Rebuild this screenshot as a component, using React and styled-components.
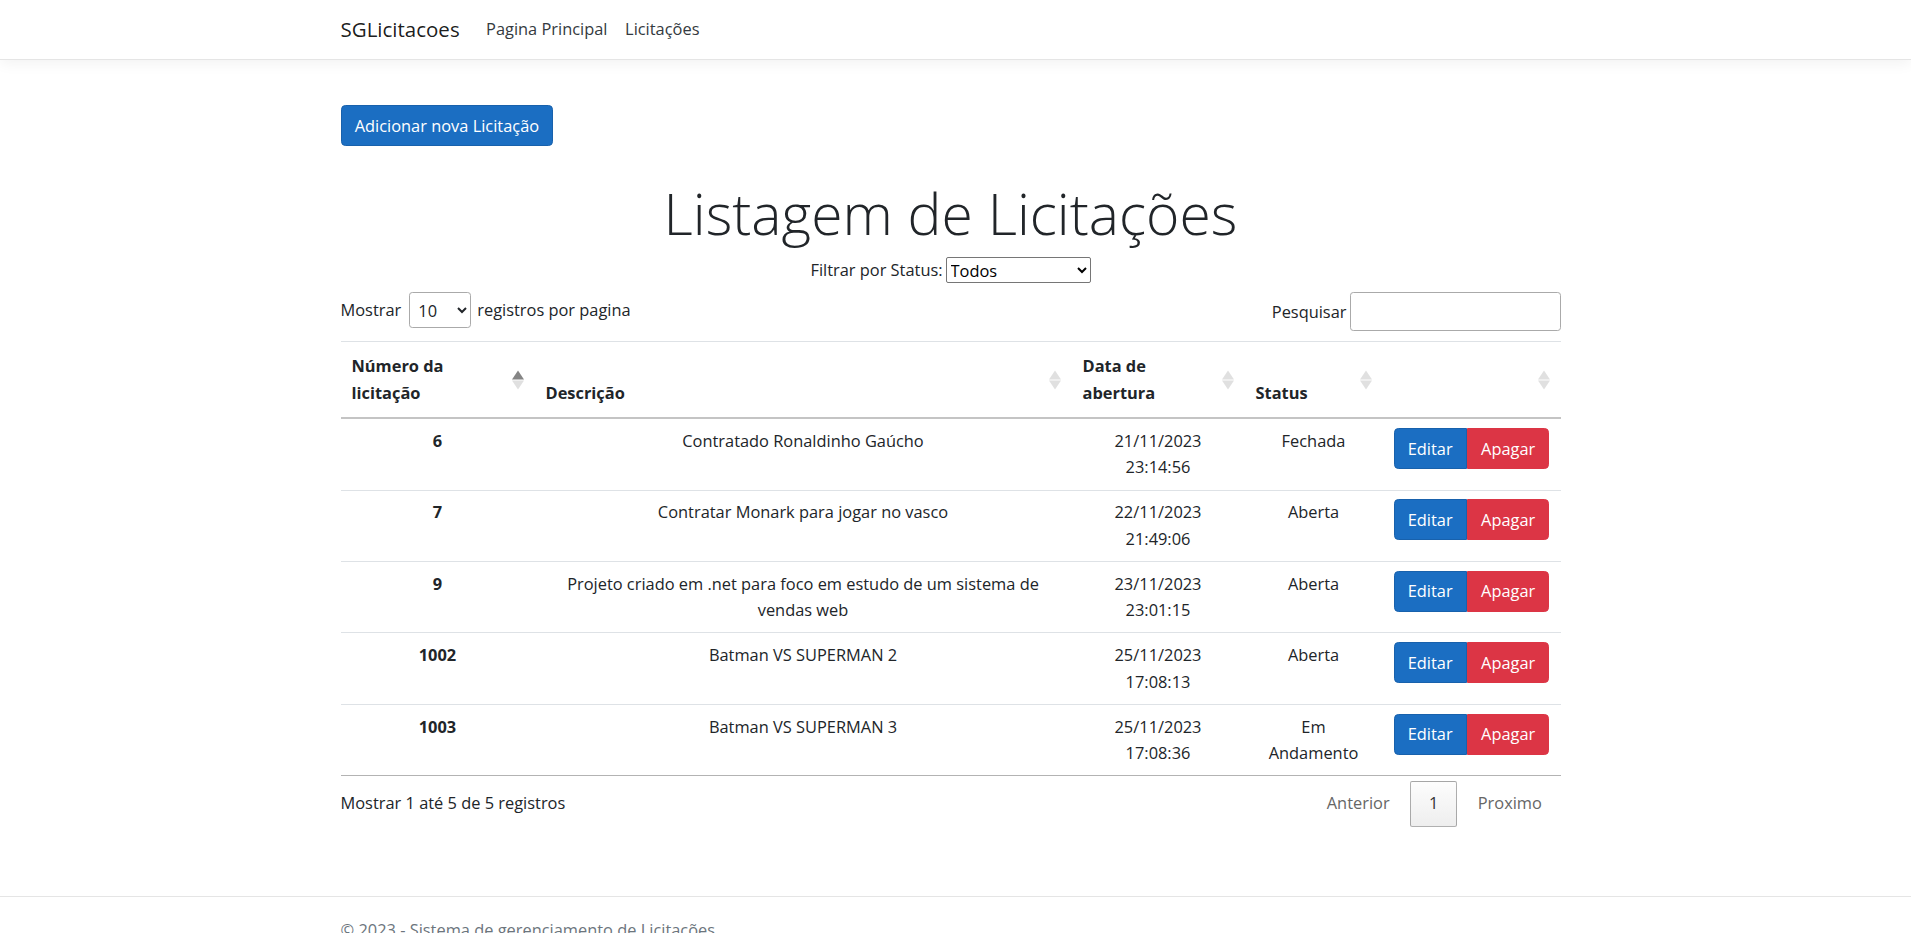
import React from "react";
import styled, { createGlobalStyle, css } from "styled-components";

const GlobalStyle = createGlobalStyle`
  * {
    box-sizing: border-box;
  }
  html {
    overflow: hidden;
  }
  body {
    margin: 0;
    font-family: "Open Sans", "Liberation Sans", sans-serif;
    font-size: 16.4px;
    line-height: 26.4px;
    color: #212529;
    background: #fff;
  }
`;

const Header = styled.header`
  height: 60px;
  background: #fff;
  border-bottom: 1px solid #e5e5e5;
  box-shadow: 0 4px 13px rgba(0, 0, 0, 0.05);
`;

// the original page sits a few pixels left of the centre
const Container = styled.div`
  width: 1220px;
  margin-left: calc(50% - 615px);
`;

const NavBar = styled(Container)`
  height: 100%;
  display: flex;
  align-items: center;
`;

const Brand = styled.a`
  font-size: 20.5px;
  line-height: 33px;
  color: rgba(0, 0, 0, 0.9);
  margin-right: 17.6px;
  text-decoration: none;
`;

const NavLink = styled.a`
  padding: 0 8.8px;
  color: #343a40;
  text-decoration: none;
`;

const Main = styled(Container)`
  padding-top: 45px;
`;

const AddButton = styled.button`
  height: 41px;
  padding: 6.6px 13.2px;
  font: inherit;
  line-height: 26.4px;
  color: #fff;
  background: #1b6ec2;
  border: 1px solid #1861ac;
  border-radius: 4.4px;
`;

const Title = styled.h1`
  margin: 30px 0 0;
  text-align: center;
  font-size: 57px;
  font-weight: 300;
  line-height: 74px;
`;

const FilterRow = styled.div`
  display: flex;
  justify-content: center;
  align-items: center;
  gap: 3px;
  margin-top: 7px;
`;

const FilterSelect = styled.select`
  width: 145px;
  height: 26px;
  font: inherit;
  line-height: 20px;
  color: #000;
  background: #fff;
  border: 1px solid #767676;
  border-radius: 2px;
`;

const Controls = styled.div`
  display: flex;
  justify-content: space-between;
  align-items: flex-start;
  margin-top: 9px;
`;

const ControlLabel = styled.label`
  display: flex;
  align-items: center;
`;

const LengthSelect = styled.select`
  width: 62px;
  height: 36px;
  margin: 0 6px 0 8px;
  padding: 4px;
  font: inherit;
  color: #212529;
  background: transparent;
  border: 1px solid #aaa;
  border-radius: 3.3px;
`;

const SearchInput = styled.input`
  width: 211px;
  height: 39px;
  margin-left: 3px;
  padding: 5px;
  font: inherit;
  background: transparent;
  border: 1px solid #aaa;
  border-radius: 3.3px;
`;

const Table = styled.table`
  width: 100%;
  margin-top: 10px;
  border-collapse: collapse;
  table-layout: fixed;

  tbody tr:last-child td {
    border-bottom: 1px solid #b3b3b3;
  }
`;

const Th = styled.th`
  position: relative;
  width: ${(p) => p.$w}px;
  padding: 11px 33px 11px 11px;
  text-align: left;
  vertical-align: bottom;
  font-weight: 700;
  border-top: 1px solid #dee2e6;
  border-bottom: 2px solid #c4c4c4;
`;

const SortIcon = styled.span`
  position: absolute;
  right: 11px;
  top: 50%;
  transform: translateY(-50%);
  display: flex;
  flex-direction: column;
  gap: 1px;
`;

const Arrow = styled.span`
  width: 0;
  height: 0;
  border-left: 6px solid transparent;
  border-right: 6px solid transparent;
  ${(p) =>
    p.$up
      ? css`
          border-bottom: 9px solid ${p.$active ? "#858585" : "#e0e0e0"};
        `
      : css`
          border-top: 9px solid #e0e0e0;
        `}
`;

const Td = styled.td`
  padding: 8.8px 11px;
  text-align: center;
  vertical-align: top;
  font-weight: ${(p) => (p.$bold ? 700 : 400)};
  border-top: 1px solid #dee2e6;
`;

const BtnGroup = styled.div`
  display: inline-flex;
`;

const ActionButton = styled.button`
  height: 41px;
  padding: 6.6px 13.2px;
  font: inherit;
  line-height: 26.4px;
  color: #fff;
  background: ${(p) => (p.$danger ? "#dc3545" : "#1b6ec2")};
  border: 1px solid ${(p) => (p.$danger ? "#dc3545" : "#1861ac")};
  border-radius: ${(p) => (p.$danger ? "0 4.4px 4.4px 0" : "4.4px 0 0 4.4px")};
`;

const BottomRow = styled.div`
  display: flex;
  justify-content: space-between;
  align-items: flex-start;
`;

const Info = styled.div`
  padding-top: 13.3px;
`;

const Paginate = styled.div`
  display: flex;
  padding-top: 4.4px;
`;

const PageButton = styled.a`
  padding: 8.8px 17.6px;
  margin-left: 2.2px;
  color: #666;
  border: 1px solid transparent;
  border-radius: 2.2px;
  ${(p) =>
    p.$current &&
    css`
      color: #333;
      border-color: rgba(0, 0, 0, 0.3);
      background: linear-gradient(to bottom, #fdfdfd 0%, #eeeeee 100%);
    `}
`;

const Footer = styled.footer`
  margin-top: 69px;
  border-top: 1px solid #e5e5e5;
  line-height: 66px;
  color: #6c757d;
  white-space: nowrap;
`;

const columns = [
  { label: "Número da licitação", w: 194, active: true },
  { label: "Descrição", w: 537 },
  { label: "Data de abertura", w: 173 },
  { label: "Status", w: 138 },
  { label: "", w: 178 },
];

const rows = [
  { id: 6, desc: "Contratado Ronaldinho Gaúcho", date: "21/11/2023 23:14:56", status: "Fechada" },
  { id: 7, desc: "Contratar Monark para jogar no vasco", date: "22/11/2023 21:49:06", status: "Aberta" },
  {
    id: 9,
    desc: "Projeto criado em .net para foco em estudo de um sistema de vendas web",
    date: "23/11/2023 23:01:15",
    status: "Aberta",
  },
  { id: 1002, desc: "Batman VS SUPERMAN 2", date: "25/11/2023 17:08:13", status: "Aberta" },
  { id: 1003, desc: "Batman VS SUPERMAN 3", date: "25/11/2023 17:08:36", status: "Em Andamento" },
];

const App = () => {
  return (
    <>
      <GlobalStyle />
      <Header>
        <NavBar>
          <Brand href="#">SGLicitacoes</Brand>
          <NavLink href="#">Pagina Principal</NavLink>
          <NavLink href="#">Licitações</NavLink>
        </NavBar>
      </Header>
      <Main>
        <AddButton>Adicionar nova Licitação</AddButton>
        <Title>Listagem de Licitações</Title>
        <FilterRow>
          <span>Filtrar por Status:</span>
          <FilterSelect defaultValue="Todos">
            <option>Todos</option>
            <option>Aberta</option>
            <option>Fechada</option>
            <option>Em Andamento</option>
          </FilterSelect>
        </FilterRow>
        <Controls>
          <ControlLabel>
            Mostrar
            <LengthSelect defaultValue="10">
              <option>10</option>
              <option>25</option>
              <option>50</option>
              <option>100</option>
            </LengthSelect>
            registros por pagina
          </ControlLabel>
          <ControlLabel>
            Pesquisar
            <SearchInput type="search" />
          </ControlLabel>
        </Controls>
        <Table>
          <thead>
            <tr>
              {columns.map((c, i) => (
                <Th key={i} $w={c.w}>
                  {c.label}
                  <SortIcon>
                    <Arrow $up $active={c.active} />
                    <Arrow />
                  </SortIcon>
                </Th>
              ))}
            </tr>
          </thead>
          <tbody>
            {rows.map((r) => (
              <tr key={r.id}>
                <Td $bold>{r.id}</Td>
                <Td>{r.desc}</Td>
                <Td>{r.date}</Td>
                <Td>{r.status}</Td>
                <Td>
                  <BtnGroup>
                    <ActionButton>Editar</ActionButton>
                    <ActionButton $danger>Apagar</ActionButton>
                  </BtnGroup>
                </Td>
              </tr>
            ))}
          </tbody>
        </Table>
        <BottomRow>
          <Info>Mostrar 1 até 5 de 5 registros</Info>
          <Paginate>
            <PageButton>Anterior</PageButton>
            <PageButton $current>1</PageButton>
            <PageButton>Proximo</PageButton>
          </Paginate>
        </BottomRow>
      </Main>
      <Footer>
        <Container>© 2023 - Sistema de gerenciamento de Licitações</Container>
      </Footer>
    </>
  );
};

export default App;
